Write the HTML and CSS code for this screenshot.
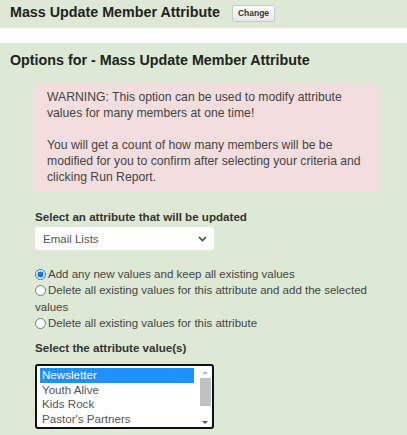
FILE: index.html
```html
<!DOCTYPE html>
<html>
<head>
<title>Mass Update Member Attribute</title>
<link rel="stylesheet" href="styles.css">
</head>
<body>
<div class="topbar">
  <span class="h1">Mass Update Member Attribute</span>
  <button class="btn-change">Change</button>
</div>
<div class="gap"></div>
<div class="panel">
  <div class="h2">Options for - Mass Update Member Attribute</div>
  <div class="content">
    <div class="warning">
      <p>WARNING: This option can be used to modify attribute values for many members at one time!</p>
      <p>You will get a count of how many members will be be modified for you to confirm after selecting your criteria and clicking Run Report.</p>
    </div>
    <div class="label">Select an attribute that will be updated</div>
    <div class="select">
      <span>Email Lists</span>
      <svg width="9" height="6" viewBox="0 0 9 6"><path d="M1 1 L4.5 4.5 L8 1" fill="none" stroke="#444" stroke-width="1.6"/></svg>
    </div>
    <div class="radios">
      <label class="radio"><span class="dot on"></span>Add any new values and keep all existing values</label>
      <label class="radio"><span class="dot"></span>Delete all existing values for this attribute and add the selected values</label>
      <label class="radio"><span class="dot"></span>Delete all existing values for this attribute</label>
    </div>
    <div class="label second">Select the attribute value(s)</div>
    <div class="listbox">
      <div class="items">
        <div class="item sel">Newsletter</div>
        <div class="item">Youth Alive</div>
        <div class="item">Kids Rock</div>
        <div class="item">Pastor's Partners</div>
      </div>
      <div class="scroll">
        <span class="arrow up"></span>
        <span class="thumb"></span>
        <span class="arrow down"></span>
      </div>
    </div>
  </div>
</div>
</body>
</html>
```

FILE: styles.css
```css
body { margin: 0; background: #dde9d4; font-family: Arial, "Liberation Sans", sans-serif; color: #333; }

.topbar { height: 28px; display: flex; align-items: center; padding-left: 10px; }
.h1 { font-size: 14.3px; font-weight: bold; color: #222; position: relative; top: -2px; }
.btn-change {
  margin-left: 12px; font-family: Arial, "Liberation Sans", sans-serif;
  font-size: 8.5px; font-weight: bold; color: #333; width: 43px;
  background: linear-gradient(#fff, #e6e6e6); border: 1px solid #c8c8c8;
  border-radius: 2px; padding: 0; height: 17px; position: relative; top: -1px;
}
.gap { height: 15px; background: #fff; }

.panel { padding: 8px 10px 0 10px; }
.h2 { font-size: 14.3px; font-weight: bold; color: #222; line-height: 18px; }
.content { padding: 14px 0 0 25px; }

.warning {
  background: #f2dede; width: 324px; padding: 6px 8px 7px 14px;
  font-size: 12.2px; line-height: 16px; color: #444; margin-left: -2px;
}
.warning p { margin: 0 0 16px 0; }
.warning p:last-child { margin-bottom: 0; }

.label { font-size: 11.6px; font-weight: bold; margin-top: 18px; line-height: 14px; }
.label.second { margin-top: 10px; }

.select {
  width: 179px; height: 23px; background: #fff; border-radius: 3px; margin-top: 3px;
  display: flex; align-items: center; justify-content: space-between;
  padding: 0 7px 0 8px; box-sizing: border-box; font-size: 11.5px; color: #555;
}

.radios { margin-top: 16px; width: 340px; font-size: 11.5px; line-height: 16.3px; color: #444; }
.radio { display: block; }
.dot {
  display: inline-block; width: 11px; height: 11px; border: 1px solid #777;
  border-radius: 50%; background: #fff; margin-right: 2px; vertical-align: -2px;
  box-sizing: border-box;
}
.dot.on { border-color: #1a73e8; background: radial-gradient(circle, #1a73e8 0 2.8px, #fff 3.3px); }

.listbox {
  width: 179px; height: 65px; margin-top: 9px; background: #fff;
  border: 2px solid #111; border-radius: 3px; box-sizing: border-box;
  display: flex; padding: 2px 1px 1px 3px;
}
.items { flex: 1; font-size: 11.6px; line-height: 14.6px; color: #555; }
.item { padding-left: 2px; }
.item.sel { background: #1e90ff; color: #fff; margin-right: 6px; }
.scroll { width: 11px; display: flex; flex-direction: column; }
.arrow { height: 10px; position: relative; }
.arrow.up::after, .arrow.down::after { content: ""; position: absolute; left: 2px; border: 3px solid transparent; }
.arrow.up::after { border-bottom-color: #bbb; top: 0; }
.arrow.down::after { border-top-color: #555; top: 5px; }
.thumb { flex: 1; background: #c1c1c1; margin: 0 0 10px 0; }
```
